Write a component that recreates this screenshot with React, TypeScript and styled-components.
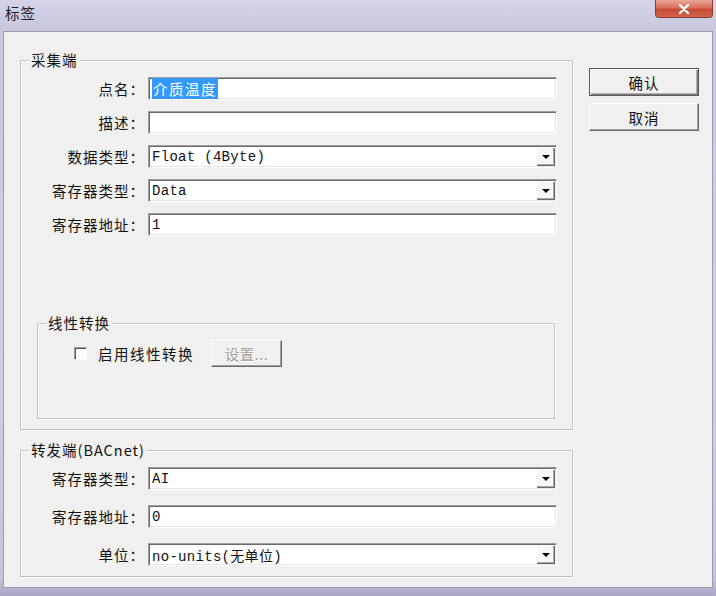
import { Fragment } from 'react';
import styled, { createGlobalStyle } from 'styled-components';

const CJK = `"Noto Sans CJK SC", "Noto Sans", sans-serif`;
const MONO = `"Liberation Mono", "Noto Sans CJK SC", monospace`;

const GlobalStyle = createGlobalStyle`
  html, body {
    margin: 0;
    padding: 0;
  }
  body {
    width: 716px;
    height: 596px;
    overflow: hidden;
    font-family: ${CJK};
    color: #111;
  }
`;

const Window = styled.div`
  width: 716px;
  height: 596px;
  box-sizing: border-box;
  display: flex;
  flex-direction: column;
  background: linear-gradient(180deg, #d5d3e8 0%, #c9c8e0 5%, #d0cfe6 60%, #c6c4dc 97%, #a9a4c4 100%);
`;

const TitleBar = styled.div`
  height: 31px;
  flex: none;
  display: flex;
  align-items: flex-start;
  justify-content: space-between;
  padding: 0 3px 0 5px;
`;

const Title = styled.div`
  margin-top: 4px;
  font-size: 14.5px;
  line-height: 17px;
  letter-spacing: 1px;
  color: #1c1c2c;
`;

const CloseButton = styled.div`
  width: 58px;
  height: 18px;
  box-sizing: border-box;
  border: 1px solid #8a3a30;
  border-top: none;
  border-radius: 0 0 4px 4px;
  background: linear-gradient(180deg, #eaa696 0%, #d8705c 45%, #c64a34 55%, #d2654d 100%);
  display: flex;
  align-items: center;
  justify-content: center;
`;

const Client = styled.div`
  flex: 1;
  margin: 0 3px 8px 3px;
  border: 1px solid #9c9aae;
  background: #f0f0f0;
  display: flex;
  gap: 16px;
  padding: 0 13px 0 16px;
`;

const LeftColumn = styled.div`
  width: 553px;
  display: flex;
  flex-direction: column;
`;

const GroupBox = styled.div<{ $top: number }>`
  position: relative;
  margin-top: ${p => p.$top}px;
  border: 1px solid #c4c4c4;
  border-bottom-color: #bcbcbc;
  box-shadow: inset 1px 1px 0 #fff, 1px 1px 0 #fff;
  padding: 16px 15px 10px 0;
`;

const Legend = styled.span`
  position: absolute;
  top: -10px;
  left: 8px;
  padding: 0 2px;
  background: #f0f0f0;
  font-size: 14.5px;
  line-height: 18px;
  letter-spacing: 1px;
`;

const FieldGrid = styled.div<{ $gap: number }>`
  display: grid;
  grid-template-columns: 124px 1fr;
  column-gap: 3px;
  row-gap: ${p => p.$gap}px;
`;

const Label = styled.label`
  text-align: right;
  font-size: 14.5px;
  line-height: 23px;
  letter-spacing: 1px;
  white-space: nowrap;
`;

const Field = styled.div`
  height: 23px;
  box-sizing: border-box;
  background: #fff;
  border-top: 1px solid #a0a0a0;
  border-left: 1px solid #a0a0a0;
  border-right: 1px solid #fff;
  border-bottom: 1px solid #fff;
  box-shadow: inset 1px 1px 0 #6a6a6a, inset -1px -1px 0 #e6e6e6;
  display: flex;
  align-items: center;
  padding-left: 3px;
  font-family: ${MONO};
  font-size: 14px;
  letter-spacing: 0.3px;
  white-space: nowrap;
`;

const Value = styled.span`
  flex: 1;
  padding-top: 1px;
`;

const Selected = styled.span`
  background: #3399ff;
  color: #fff;
  font-family: ${CJK};
  font-size: 14.5px;
  line-height: 18px;
  letter-spacing: 1.5px;
  padding: 0 1px;
`;

const ArrowButton = styled.div`
  width: 18px;
  align-self: stretch;
  margin: 2px 1px 1px 0;
  box-sizing: border-box;
  background: #f7f7f7;
  border-right: 1px solid #6a6a6a;
  border-bottom: 1px solid #6a6a6a;
  box-shadow: inset -1px -1px 0 #a8a8a8;
  display: flex;
  align-items: center;
  justify-content: center;

  &::after {
    content: '';
    border-left: 4px solid transparent;
    border-right: 4px solid transparent;
    border-top: 4px solid #000;
    margin-top: 1px;
  }
`;

const LinearBox = styled.div`
  position: relative;
  margin: 87px 2px 0 16px;
  height: 96px;
  box-sizing: border-box;
  border: 1px solid #c4c4c4;
  box-shadow: inset 1px 1px 0 #fff, 1px 1px 0 #fff;
  padding: 16px 0 0 36px;
`;

const CheckRow = styled.div`
  display: flex;
  align-items: center;
`;

const CheckBox = styled.span`
  width: 13px;
  height: 13px;
  box-sizing: border-box;
  background: #fff;
  border-top: 1px solid #a0a0a0;
  border-left: 1px solid #a0a0a0;
  border-right: 1px solid #fff;
  border-bottom: 1px solid #fff;
  box-shadow: inset 1px 1px 0 #555;
`;

const CheckLabel = styled.span`
  margin-left: 11px;
  font-size: 14.5px;
  letter-spacing: 1.5px;
`;

const PushButton = styled.div<{ $isDefault?: boolean; $disabled?: boolean }>`
  box-sizing: border-box;
  display: flex;
  align-items: center;
  justify-content: center;
  background: #f0f0f0;
  font-size: 14.5px;
  letter-spacing: 1px;
  border-top: 1px solid #fff;
  border-left: 1px solid #fff;
  border-right: 1px solid #696969;
  border-bottom: 1px solid #696969;
  box-shadow: inset -1px -1px 0 #a0a0a0;
  color: ${p => (p.$disabled ? '#a2a2a2' : '#111')};
  text-shadow: ${p => (p.$disabled ? '1px 1px 0 #fff' : 'none')};
  ${p => p.$isDefault && `
    border: 1px solid #5a5a5a;
    box-shadow: inset 1px 1px 0 #fff, inset -1px -1px 0 #7a7a7a, inset -2px -2px 0 #b0b0b0;
  `};
`;

const SettingsButton = styled(PushButton)`
  width: 71px;
  height: 27px;
  margin-left: 17px;
  letter-spacing: 0.5px;
`;

const ButtonColumn = styled.div`
  width: 110px;
  margin-top: 36px;
  display: flex;
  flex-direction: column;
  gap: 7px;
`;

const DialogButton = styled(PushButton)`
  height: 28px;
`;

type Row = { label: string; value?: string; select?: boolean; selected?: string };

const sourceRows: Row[] = [
  { label: '点名：', selected: '介质温度' },
  { label: '描述：', value: '' },
  { label: '数据类型：', value: 'Float (4Byte)', select: true },
  { label: '寄存器类型：', value: 'Data', select: true },
  { label: '寄存器地址：', value: '1' },
];

const forwardRows: Row[] = [
  { label: '寄存器类型：', value: 'AI', select: true },
  { label: '寄存器地址：', value: '0' },
  { label: '单位：', value: 'no-units(无单位)', select: true },
];

function Fields({ rows, gap }: { rows: Row[]; gap: number }) {
  return (
    <FieldGrid $gap={gap}>
      {rows.map(row => (
        <Fragment key={row.label}>
          <Label>{row.label}</Label>
          <Field>
            <Value>{row.selected ? <Selected>{row.selected}</Selected> : row.value}</Value>
            {row.select && <ArrowButton />}
          </Field>
        </Fragment>
      ))}
    </FieldGrid>
  );
}

function App() {
  return (
    <>
      <GlobalStyle />
      <Window>
        <TitleBar>
          <Title>标签</Title>
          <CloseButton>
            <svg width="12" height="10" viewBox="0 0 12 10">
              <path d="M2 1 L10 9 M10 1 L2 9" stroke="#fff" strokeWidth="2.4" strokeLinecap="round" />
            </svg>
          </CloseButton>
        </TitleBar>
        <Client>
          <LeftColumn>
            <GroupBox $top={28}>
              <Legend>采集端</Legend>
              <Fields rows={sourceRows} gap={11} />
              <LinearBox>
                <Legend>线性转换</Legend>
                <CheckRow>
                  <CheckBox />
                  <CheckLabel>启用线性转换</CheckLabel>
                  <SettingsButton $disabled>设置...</SettingsButton>
                </CheckRow>
              </LinearBox>
            </GroupBox>
            <GroupBox $top={20}>
              <Legend>转发端(BACnet)</Legend>
              <Fields rows={forwardRows} gap={15} />
            </GroupBox>
          </LeftColumn>
          <ButtonColumn>
            <DialogButton $isDefault>确认</DialogButton>
            <DialogButton>取消</DialogButton>
          </ButtonColumn>
        </Client>
      </Window>
    </>
  );
}

export default App;
